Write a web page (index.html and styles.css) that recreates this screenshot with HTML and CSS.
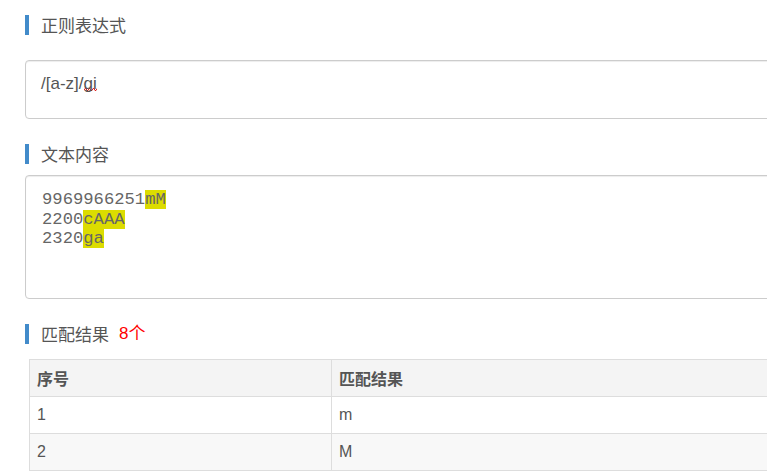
FILE: index.html
```html
<!DOCTYPE html>
<html lang="zh-CN">
<head>
<meta charset="utf-8">
<title>正则表达式</title>
<link rel="stylesheet" href="styles.css">
</head>
<body>
<div class="page">
  <div class="section-title first">正则表达式</div>
  <div class="regex-box">/[a-z]/<span class="spell">gi</span></div>

  <div class="section-title">文本内容</div>
  <div class="text-box">9969966251<mark>mM</mark>
2200<mark>cAAA</mark>
2320<mark>ga</mark></div>

  <div class="section-title">匹配结果<span class="count">8个</span></div>
  <table class="result-table">
    <thead>
      <tr><th class="col-index">序号</th><th>匹配结果</th></tr>
    </thead>
    <tbody>
      <tr><td>1</td><td>m</td></tr>
      <tr class="alt"><td>2</td><td>M</td></tr>
    </tbody>
  </table>
</div>
</body>
</html>
```

FILE: styles.css
```css
html, body {
  margin: 0;
  padding: 0;
  overflow: hidden;
  background: #fff;
}

.page {
  width: 1000px;
  padding-left: 25px;
  font-family: "Liberation Sans", "Noto Sans CJK SC", sans-serif;
  color: #555;
}

.section-title {
  margin-top: 25px;
  border-left: 4px solid #428bca;
  padding-left: 12px;
  height: 20px;
  line-height: 20px;
  font-size: 17px;
  font-family: "Noto Sans CJK SC", sans-serif;
  color: #555;
  display: flex;
  align-items: center;
}

.section-title.first {
  margin-top: 15px;
}

.count {
  color: #ff0000;
  margin-left: 10px;
  font-family: "Liberation Sans", "Noto Sans CJK SC", sans-serif;
}

.regex-box {
  box-sizing: border-box;
  margin-top: 25px;
  height: 59px;
  border: 1px solid #ccc;
  border-radius: 4px;
  box-shadow: inset 0 1px 1px rgba(0, 0, 0, 0.075);
  padding: 13px 15px 0;
  font-size: 17px;
  color: #555;
}

.spell {
  background-image: url("data:image/svg+xml,%3Csvg xmlns='http://www.w3.org/2000/svg' width='4' height='3'%3E%3Cpath d='M0 2.5 L1 0.5 L2 0.5 L3 2.5 L4 2.5' fill='none' stroke='%23e02020' stroke-width='1'/%3E%3C/svg%3E");
  background-repeat: repeat-x;
  background-size: 4px 3px;
  background-position: 0 calc(100% - 2px);
}

.text-box {
  box-sizing: border-box;
  margin-top: 11px;
  height: 124px;
  border: 1px solid #ccc;
  border-radius: 4px;
  box-shadow: inset 0 1px 1px rgba(0, 0, 0, 0.075);
  padding: 14px 16px 0;
  font-family: "Liberation Mono", monospace;
  font-size: 17.2px;
  line-height: 19.5px;
  color: #666;
  white-space: pre;
}

.text-box mark {
  background: #dcdc00;
  color: #666;
}

.result-table {
  margin-top: 15px;
  margin-left: 4px;
  width: 900px;
  border-collapse: collapse;
  font-size: 16px;
  color: #555;
}

.result-table th,
.result-table td {
  border: 1px solid #ddd;
  height: 36px;
  padding: 0 7px;
  text-align: left;
  vertical-align: middle;
}

.result-table th {
  background: #f4f4f4;
  font-family: "Noto Sans CJK SC", sans-serif;
  font-weight: bold;
  color: #555;
}

.result-table .col-index {
  width: 287px;
}

.result-table tr.alt td {
  background: #f8f8f8;
}
```
